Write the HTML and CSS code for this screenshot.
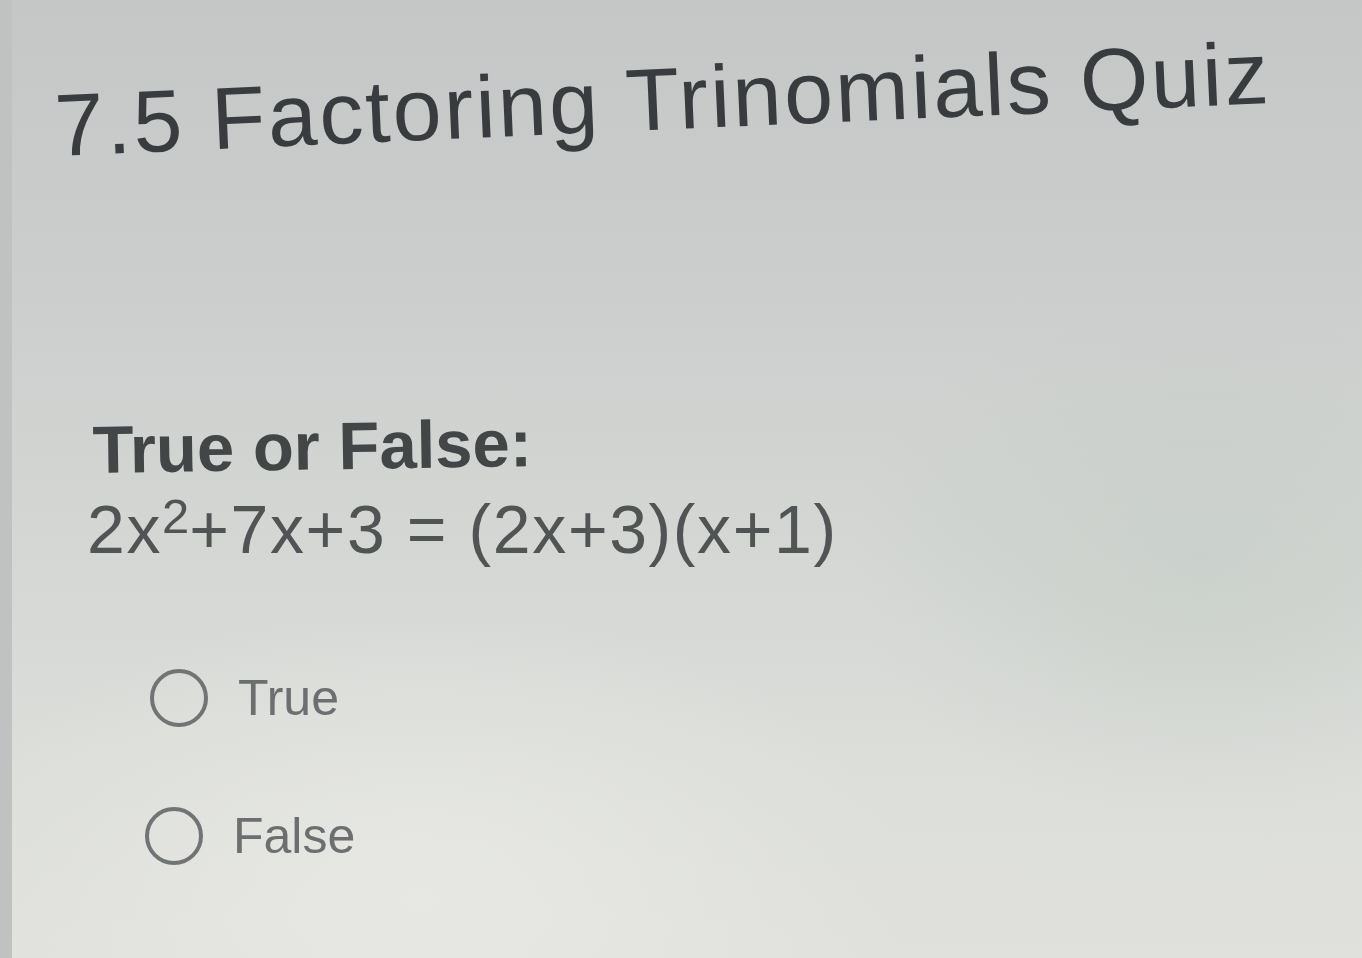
FILE: index.html
```html
<!DOCTYPE html>
<html lang="en">
<head>
<meta charset="utf-8">
<title>7.5 Factoring Trinomials Quiz</title>
<link rel="stylesheet" href="styles.css">
</head>
<body>
<main class="quiz">
  <h1 class="title">7.5 Factoring Trinomials Quiz</h1>
  <section class="question">
    <p class="prompt">True or False:</p>
    <p class="equation">2x<sup>2</sup>+7x+3 = (2x+3)(x+1)</p>
    <ul class="options">
      <li class="option"><span class="radio"></span><span class="label">True</span></li>
      <li class="option option-second"><span class="radio"></span><span class="label">False</span></li>
    </ul>
  </section>
</main>
</body>
</html>
```

FILE: styles.css
```css
html, body {
  margin: 0;
  padding: 0;
  height: 100%;
}
body {
  font-family: "Liberation Sans", Arial, Helvetica, sans-serif;
  background:
    radial-gradient(ellipse 700px 420px at 420px 900px, rgba(232,233,229,0.9), rgba(232,233,229,0) 70%),
    radial-gradient(ellipse 500px 380px at 1200px 560px, rgba(190,200,192,0.45), rgba(190,200,192,0) 70%),
    linear-gradient(180deg, #c5c7c6 0%, #cccecd 30%, #d3d6d3 55%, #dcdeda 80%, #e0e1dd 100%);
  overflow: hidden;
}
.quiz {
  height: 958px;
  box-sizing: border-box;
  padding-top: 82px;
  border-left: 12px solid #c0c2c1;
}
.title {
  margin: 0 0 0 44px;
  font-size: 88px;
  font-weight: 400;
  line-height: 1;
  letter-spacing: 2.5px;
  color: #383c3e;
  white-space: nowrap;
  transform: rotate(-2.5deg);
  transform-origin: 0 80%;
  width: max-content;
}
.question {
  padding-left: 81px;
  margin-top: 246px;
}
.prompt {
  margin: 0;
  font-size: 67px;
  font-weight: 700;
  line-height: 1;
  color: #424647;
  transform: rotate(-0.9deg);
  transform-origin: 0 80%;
  width: max-content;
}
.equation {
  margin: 12px 0 0 -6px;
  font-size: 68px;
  font-weight: 400;
  line-height: 1;
  letter-spacing: 1.6px;
  color: #505455;
}
.equation sup {
  font-size: 0.72em;
  line-height: 0;
  vertical-align: 0.41em;
  letter-spacing: 0;
}
.options {
  list-style: none;
  margin: 106px 0 0 0;
  padding: 0 0 0 57px;
  display: flex;
  flex-direction: column;
  gap: 80px;
}
.option {
  display: flex;
  align-items: center;
  gap: 30px;
  height: 58px;
}
.option-second {
  margin-left: -5px;
}
.radio {
  width: 50px;
  height: 50px;
  border: 4px solid #707474;
  border-radius: 50%;
  flex: none;
}
.label {
  font-size: 50px;
  line-height: 1;
  color: #6b6f70;
}
```
